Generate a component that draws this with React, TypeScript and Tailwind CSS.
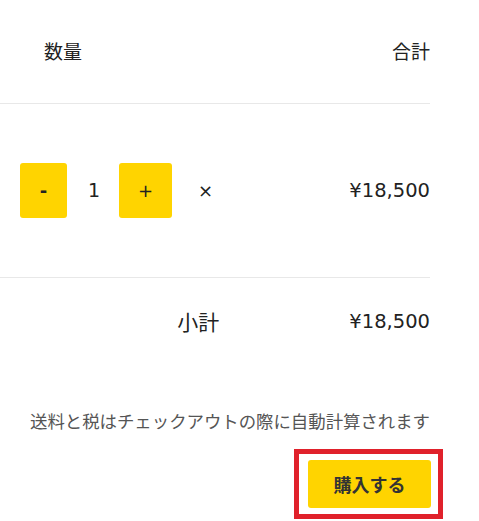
import React from "react";

const font = { fontFamily: '"DejaVu Sans", "Noto Sans CJK JP", sans-serif' };

export default function App() {
  return (
    <div className="w-[479px] h-[521px] bg-white text-[#222]" style={font}>
      <div className="w-[430px]">
        {/* header */}
        <div className="flex items-center justify-between h-[104px] border-b border-[#e8e8e8] pl-[44px]">
          <span className="text-[19px] font-['Noto_Sans_CJK_JP']">数量</span>
          <span className="text-[19px] font-['Noto_Sans_CJK_JP']">合計</span>
        </div>

        {/* item row */}
        <div className="flex items-center h-[174px] border-b border-[#e8e8e8] pl-[20px]">
          <button className="w-[47px] h-[55px] rounded-[3px] bg-[#ffd400] text-[18px] font-bold">-</button>
          <span className="ml-[21px] mr-[19px] text-[19px]">1</span>
          <button className="w-[53px] h-[55px] rounded-[3px] bg-[#ffd400] text-[18px]">+</button>
          <span className="ml-[26px] text-[18px]">×</span>
          <span className="ml-auto text-[19.5px]">¥18,500</span>
        </div>

        {/* subtotal */}
        <div className="flex items-center justify-end h-[88px]">
          <span className="text-[21px] font-['Noto_Sans_CJK_JP']">小計</span>
          <span className="ml-[130px] text-[19.5px]">¥18,500</span>
        </div>

        <p className="mt-[43px] text-right text-[17.4px] leading-[24px] text-[#555] font-['Noto_Sans_CJK_JP']">
          送料と税はチェックアウトの際に自動計算されます
        </p>
      </div>

      <div className="flex justify-end w-[443px] mt-[16px]">
        <div className="border-[5px] border-[#e0212b] pl-[9px] pr-[7px] py-[6px]">
          <button className="w-[123px] h-[48px] rounded-[3px] bg-[#ffd400] text-[18px] font-bold text-[#333] font-['Noto_Sans_CJK_JP']">
            購入する
          </button>
        </div>
      </div>
    </div>
  );
}
